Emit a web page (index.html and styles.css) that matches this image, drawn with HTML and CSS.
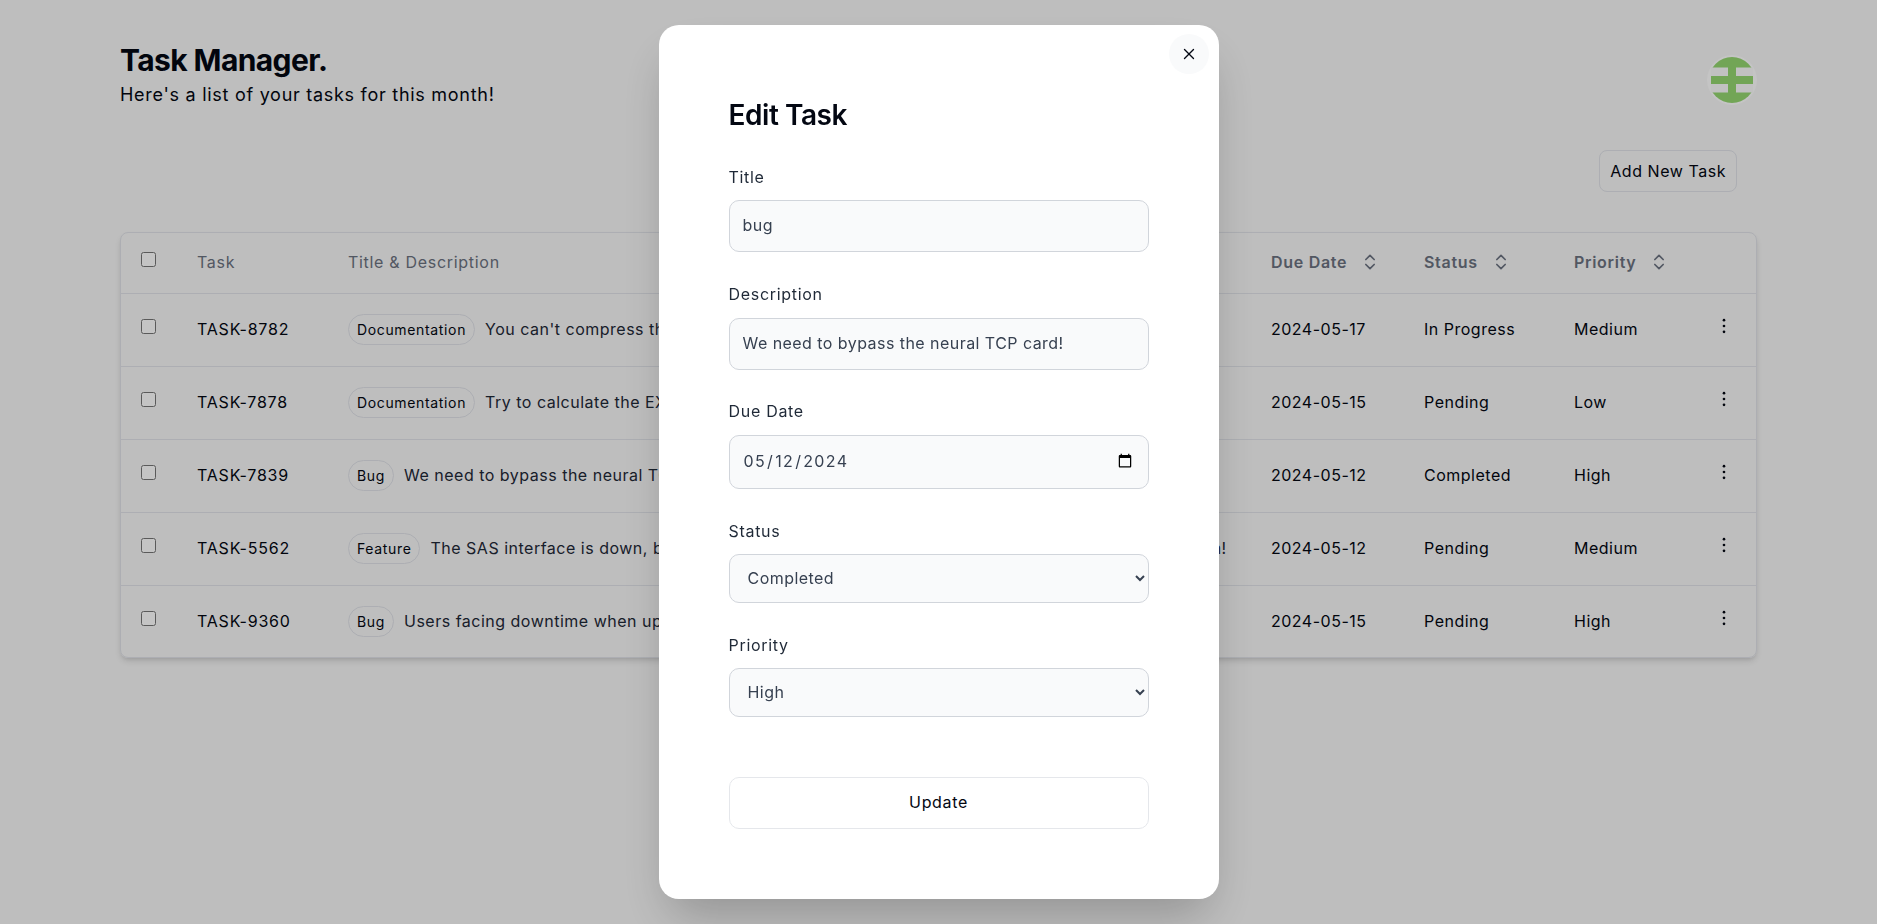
FILE: index.html
```html
<!DOCTYPE html>
<html lang="en">
<head>
<meta charset="utf-8">
<title>Task Manager</title>
<link rel="stylesheet" href="styles.css">
</head>
<body>
<div class="page">
  <header class="top">
    <div>
      <h1 class="brand">Task Manager.</h1>
      <p class="sub">Here's a list of your tasks for this month!</p>
    </div>
    <svg class="avatar" viewBox="0 0 50 50" width="50" height="50">
      <defs><clipPath id="avatar-clip"><rect x="4" y="0" width="42" height="50"/></clipPath></defs>
      <circle cx="25" cy="25" r="25" fill="#fff"/>
      <g clip-path="url(#avatar-clip)">
        <circle cx="25" cy="25" r="23" fill="#95d770"/>
        <rect x="0" y="12.5" width="21" height="8.5" fill="#fbfbfb"/>
        <rect x="29" y="12.5" width="21" height="8.5" fill="#fbfbfb"/>
        <rect x="0" y="29" width="21" height="8.5" fill="#fbfbfb"/>
        <rect x="29" y="29" width="21" height="8.5" fill="#fbfbfb"/>
      </g>
    </svg>
  </header>
  <div class="actions"><button class="add">Add New Task</button></div>
  <div class="card">
    <table class="tasks">
      <thead>
        <tr>
          <th class="c-check"><input type="checkbox" class="check"></th>
          <th class="c-id">Task</th>
          <th class="c-title">Title &amp; Description</th>
          <th class="c-date sort"><span class="th-in">Due Date <svg class="sorter" viewBox="0 0 24 24"><path d="m7 15 5 5 5-5"/><path d="m7 9 5-5 5 5"/></svg></span></th>
          <th class="c-status sort"><span class="th-in">Status <svg class="sorter" viewBox="0 0 24 24"><path d="m7 15 5 5 5-5"/><path d="m7 9 5-5 5 5"/></svg></span></th>
          <th class="c-prio sort"><span class="th-in">Priority <svg class="sorter" viewBox="0 0 24 24"><path d="m7 15 5 5 5-5"/><path d="m7 9 5-5 5 5"/></svg></span></th>
          <th class="c-more"></th>
        </tr>
      </thead>
      <tbody>
        <tr>
          <td class="c-check"><input type="checkbox" class="check"></td>
          <td class="id">TASK-8782</td>
          <td class="desc"><span class="badge">Documentation</span>You can't compress the program without quantifying the open-source SSD pixel!</td>
          <td>2024-05-17</td><td>In Progress</td><td>Medium</td>
          <td class="c-more"><svg class="kebab" viewBox="0 0 24 24"><circle cx="12" cy="5" r="1.6"/><circle cx="12" cy="12" r="1.6"/><circle cx="12" cy="19" r="1.6"/></svg></td>
        </tr>
        <tr>
          <td class="c-check"><input type="checkbox" class="check"></td>
          <td class="id">TASK-7878</td>
          <td class="desc"><span class="badge">Documentation</span>Try to calculate the EXE feed, maybe it will index the multi-byte pixel!</td>
          <td>2024-05-15</td><td>Pending</td><td>Low</td>
          <td class="c-more"><svg class="kebab" viewBox="0 0 24 24"><circle cx="12" cy="5" r="1.6"/><circle cx="12" cy="12" r="1.6"/><circle cx="12" cy="19" r="1.6"/></svg></td>
        </tr>
        <tr>
          <td class="c-check"><input type="checkbox" class="check"></td>
          <td class="id">TASK-7839</td>
          <td class="desc"><span class="badge">Bug</span>We need to bypass the neural TCP card!</td>
          <td>2024-05-12</td><td>Completed</td><td>High</td>
          <td class="c-more"><svg class="kebab" viewBox="0 0 24 24"><circle cx="12" cy="5" r="1.6"/><circle cx="12" cy="12" r="1.6"/><circle cx="12" cy="19" r="1.6"/></svg></td>
        </tr>
        <tr>
          <td class="c-check"><input type="checkbox" class="check"></td>
          <td class="id">TASK-5562</td>
          <td class="desc"><span class="badge">Feature</span>The SAS interface is down, bypass the open-source pixel so we can back up the PNG's bandwidth!</td>
          <td>2024-05-12</td><td>Pending</td><td>Medium</td>
          <td class="c-more"><svg class="kebab" viewBox="0 0 24 24"><circle cx="12" cy="5" r="1.6"/><circle cx="12" cy="12" r="1.6"/><circle cx="12" cy="19" r="1.6"/></svg></td>
        </tr>
        <tr>
          <td class="c-check"><input type="checkbox" class="check"></td>
          <td class="id">TASK-9360</td>
          <td class="desc"><span class="badge">Bug</span>Users facing downtime when upgrading to the latest version.</td>
          <td>2024-05-15</td><td>Pending</td><td>High</td>
          <td class="c-more"><svg class="kebab" viewBox="0 0 24 24"><circle cx="12" cy="5" r="1.6"/><circle cx="12" cy="12" r="1.6"/><circle cx="12" cy="19" r="1.6"/></svg></td>
        </tr>
      </tbody>
    </table>
  </div>
</div>

<div class="overlay">
  <div class="modal">
    <button class="close" aria-label="Close"><svg viewBox="0 0 24 24"><path d="M18 6 6 18"/><path d="m6 6 12 12"/></svg></button>
    <h2 class="modal-title">Edit Task</h2>
    <form class="form">
      <label class="field f-title"><span class="lab">Title</span><input class="ctl h-title" type="text" value="bug"></label>
      <label class="field f-desc"><span class="lab lab-wide">Description</span><input class="ctl h-title" type="text" value="We need to bypass the neural TCP card!"></label>
      <label class="field f-date"><span class="lab lab-wide">Due Date</span><input class="ctl h-date" type="date" value="2024-05-12"></label>
      <label class="field f-status"><span class="lab">Status</span><select class="ctl h-sel"><option>Completed</option><option>Pending</option><option>In Progress</option></select></label>
      <label class="field f-prio"><span class="lab">Priority</span><select class="ctl h-sel"><option>High</option><option>Medium</option><option>Low</option></select></label>
      <button type="button" class="update">Update</button>
    </form>
  </div>
</div>
</body>
</html>
```
FILE: styles.css
```css
* { box-sizing: border-box; }
html, body { margin: 0; height: 100%; overflow: hidden; }
body { background: #f7f7f7; color: #030712; font-family: Inter, "Liberation Sans", sans-serif; font-size: 16px; }

.page { padding: 45px 120px 0; height: 924px; }
.top { display: flex; justify-content: space-between; align-items: flex-start; height: 105px; }
.brand { margin: 0; font-size: 30px; line-height: 30px; font-weight: 700; letter-spacing: -.6px; color: #030712; }
.sub { margin: 8px 0 0; font-size: 18px; line-height: 24px; color: #030712; letter-spacing: .72px; font-weight: 400; }
.avatar { display: block; margin-top: 10px; }

.actions { display: flex; justify-content: flex-end; padding: 0 20px 0 0; height: 42px; align-items: flex-end; }
.add { height: 42px; padding: 0 10px; background: transparent; border: 1px solid #e1e3e9; border-radius: 8px; font: 400 16px Inter, "Liberation Sans", sans-serif; letter-spacing: .55px; color: #030712; }

.card { margin-top: 40px; width: 1637px; height: 426px; border: 1px solid #e1e3e9; border-radius: 8px; box-shadow: 0 4px 6px -1px rgba(0,0,0,.12), 0 2px 4px -2px rgba(0,0,0,.1); overflow: hidden; }
.tasks { width: 100%; border-collapse: collapse; table-layout: fixed; font-size: 16px; letter-spacing: .5px; }
.tasks th, .tasks td { padding: 0 0 2px; text-align: left; white-space: nowrap; }
.tasks thead tr { height: 60px; }
.tasks tbody tr { height: 73px; border-top: 1px solid #e1e3e9; }
.tasks th { color: #6b7280; font-weight: 400; letter-spacing: .7px; }
.tasks th.sort { font-weight: 600; }
.tasks th.c-check, .tasks td.c-check { width: 76px; padding: 0 0 0 20px; }
.c-id { width: 151px; }
.c-title { width: 923px; }
.c-date { width: 153px; }
.c-status { width: 150px; }
.c-prio { width: 130px; }
.c-more { width: auto; }
.id { letter-spacing: .8px; }
.th-in { display: inline-flex; align-items: center; gap: 13px; }
.check { display: block; width: 15px; height: 15px; margin: -7px 0 0 0; }
.sorter { width: 20px; height: 20px; fill: none; stroke: #6b7280; stroke-width: 2; stroke-linecap: round; stroke-linejoin: round; }
.badge { display: inline-flex; align-items: center; height: 31px; padding: 0 8px; margin: 0 10px 2px 0; border: 1px solid #e1e3e9; border-radius: 999px; font-size: 14px; font-weight: 400; letter-spacing: .65px; color: #030712; vertical-align: middle; }
.desc { color: #1f2937; overflow: hidden; }
.tasks td.desc { padding: 2px 0 0; letter-spacing: .5px; }
.kebab { display: block; width: 20px; height: 20px; margin: -5px 0 0 10px; fill: #030712; }

.overlay { position: fixed; inset: 0; background: rgba(0,0,0,.23); display: flex; align-items: center; justify-content: center; }
.modal { position: relative; width: 560px; height: 874px; background: #fff; border-radius: 20px; padding: 75px 70px 0; box-shadow: 0 25px 50px -12px rgba(0,0,0,.25); }
.close { position: absolute; top: 9px; right: 10px; width: 40px; height: 40px; border: 0; border-radius: 50%; background: #f9fafb; display: flex; align-items: center; justify-content: center; padding: 0; }
.close svg { width: 18px; height: 18px; fill: none; stroke: #030712; stroke-width: 1.8; stroke-linecap: round; stroke-linejoin: round; }
.modal-title { margin: 0; font-size: 28px; line-height: 30px; font-weight: 600; letter-spacing: -.45px; color: #030712; }
.form { display: flex; flex-direction: column; }
.field { display: flex; flex-direction: column; }
.lab { font-size: 16px; line-height: 20px; font-weight: 400; letter-spacing: .7px; color: #1f2937; margin-bottom: 13px; }
.lab-wide { margin-bottom: 14px; }
.ctl { width: 100%; border: 1px solid #d1d5db; border-radius: 10px; background: #f9fafb; color: #374151; font: 400 16px Inter, "Liberation Sans", sans-serif; letter-spacing: .45px; padding: 0 13px 2px; outline: 0; }
select.ctl { padding-left: 14px; }
.h-title { height: 52px; }
.h-date { height: 54px; letter-spacing: 1.35px; }
.h-sel { height: 49px; }
.f-title { margin-top: 37px; }
.f-desc { margin-top: 32px; }
.f-date { margin-top: 31px; }
.f-status { margin-top: 32px; }
.f-prio { margin-top: 32px; }
.update { margin-top: 60px; height: 52px; padding-bottom: 3px; border: 1px solid #e5e7eb; border-radius: 10px; background: #fff; font: 400 16px Inter, "Liberation Sans", sans-serif; letter-spacing: .65px; color: #030712; }
```
